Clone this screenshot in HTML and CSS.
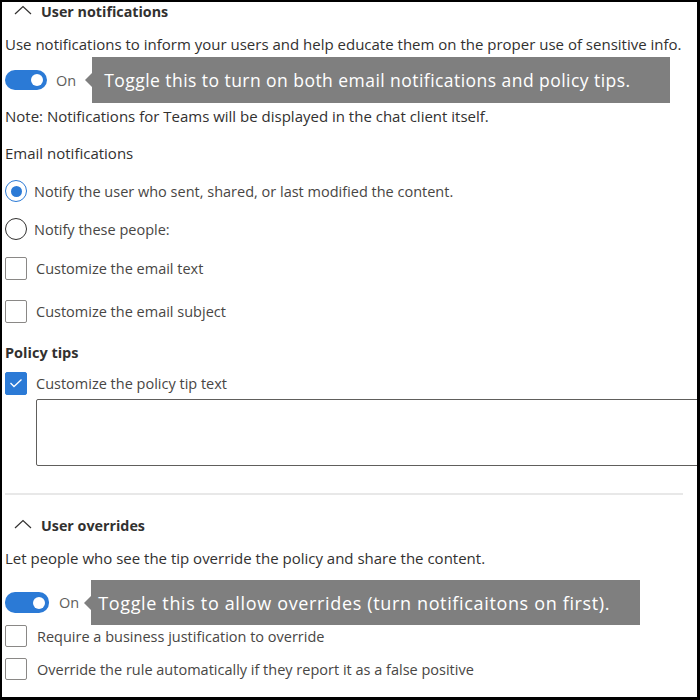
FILE: index.html
```html
<!DOCTYPE html>
<html>
<head>
<meta charset="utf-8">
<link rel="stylesheet" href="styles.css">
</head>
<body>
<div class="frame">
  <div class="section-head head-1">
    <svg class="chev" width="18" height="10" viewBox="0 0 18 10"><polyline points="1,9 9,1.5 17,9" fill="none" stroke="#323130" stroke-width="1.2"/></svg>
    <span class="head-title">User notifications</span>
  </div>
  <div class="text desc-1">Use notifications to inform your users and help educate them on the proper use of sensitive info.</div>
  <div class="toggle-row row-t1">
    <span class="toggle"><span class="knob"></span></span>
    <span class="on">On</span>
    <div class="callout callout-1">Toggle this to turn on both email notifications and policy tips.</div>
  </div>
  <div class="text note">Note: Notifications for Teams will be displayed in the chat client itself.</div>
  <div class="text sub-head">Email notifications</div>
  <div class="opt radio-1"><span class="radio checked"><span class="dot"></span></span><span class="label">Notify the user who sent, shared, or last modified the content.</span></div>
  <div class="opt radio-2"><span class="radio"></span><span class="label">Notify these people:</span></div>
  <div class="opt cb-1"><span class="cb"></span><span class="label lbl-cb">Customize the email text</span></div>
  <div class="opt cb-2"><span class="cb"></span><span class="label lbl-cb">Customize the email subject</span></div>
  <div class="text bold-head">Policy tips</div>
  <div class="opt cb-3"><span class="cb checked"><svg width="14" height="10" viewBox="0 0 14 10"><polyline points="1.5,5 5,8.5 12.5,1.5" fill="none" stroke="#fff" stroke-width="1.3"/></svg></span><span class="label lbl-cb">Customize the policy tip text</span></div>
  <div class="textarea"></div>
  <div class="sep"></div>
  <div class="section-head head-2">
    <svg class="chev" width="18" height="10" viewBox="0 0 18 10"><polyline points="1,9 9,1.5 17,9" fill="none" stroke="#323130" stroke-width="1.2"/></svg>
    <span class="head-title">User overrides</span>
  </div>
  <div class="text desc-2">Let people who see the tip override the policy and share the content.</div>
  <div class="toggle-row row-t2">
    <span class="toggle"><span class="knob"></span></span>
    <span class="on">On</span>
    <div class="callout callout-2">Toggle this to allow overrides (turn notificaitons on first).</div>
  </div>
  <div class="opt cb-4"><span class="cb"></span><span class="label lbl-cb2">Require a business justification to override</span></div>
  <div class="opt cb-5"><span class="cb"></span><span class="label lbl-cb2">Override the rule automatically if they report it as a false positive</span></div>
</div>
</body>
</html>
```

FILE: styles.css
```css
* { box-sizing: border-box; }
html, body { margin: 0; padding: 0; background: #fff; }
body { font-family: "Open Sans", "Noto Sans", sans-serif; color: #323130; }

.frame {
  width: 700px;
  height: 700px;
  border-top: 2px solid #000;
  border-left: 2px solid #000;
  border-right: 3px solid #000;
  border-bottom: 3px solid #000;
  overflow: hidden;
  padding-left: 3px;
  display: flex;
  flex-direction: column;
}

.text { font-size: 15px; line-height: 20px; height: 20px; white-space: nowrap; flex: 0 0 20px; }

.section-head { display: flex; align-items: center; flex: 0 0 16px; padding-left: 9px; }
.chev { margin-right: 9px; margin-top: -3px; }
.head-title { font-weight: 700; font-size: 14.3px; color: #323130; }
.head-1 { margin-top: 0; }

.desc-1 { margin-top: 13px; }

.toggle-row { display: flex; align-items: center; }
.row-t1 { margin-top: 3px; flex: 0 0 46px; }
.toggle {
  width: 42px; height: 20px; border-radius: 10px; background: #2b7ad6;
  display: flex; align-items: center; justify-content: flex-end; padding-right: 4px;
}
.row-t2 .toggle { width: 44px; height: 21px; }
.knob { width: 12px; height: 12px; border-radius: 50%; background: #fff; }
.on { font-size: 14.5px; color: #605e5c; margin-left: 9px; }
.row-t2 .on { margin-left: 10px; }

.callout {
  position: relative;
  background: #7f7f7f;
  color: #fff;
  height: 100%;
  display: flex;
  align-items: center;
  white-space: nowrap;
}
.callout::before {
  content: "";
  position: absolute;
  left: -7px;
  top: 50%;
  margin-top: -7px;
  border-top: 7px solid transparent;
  border-bottom: 7px solid transparent;
  border-right: 7px solid #7f7f7f;
}
.callout-1 { margin-left: 16px; width: 578px; padding-left: 12px; font-size: 17.5px; letter-spacing: 0.45px; }
.row-t2 { margin-top: 12px; flex: 0 0 45px; }
.callout-2 { margin-left: 12px; width: 549px; padding-left: 7px; font-size: 18px; letter-spacing: 0.65px; }

.note { margin-top: 3px; }
.sub-head { margin-top: 17px; }

.opt { display: flex; align-items: center; flex: 0 0 24px; }
.label { font-size: 14.5px; color: #484644; white-space: nowrap; }
.radio {
  width: 22px; height: 22px; border-radius: 50%; border: 1px solid #323130;
  display: flex; align-items: center; justify-content: center; margin-right: 7px;
}
.radio.checked { border-color: #2b7ad6; }
.dot { width: 11px; height: 11px; border-radius: 50%; background: #2b7ad6; }
.cb {
  width: 22px; height: 23px; border: 1px solid #8a8886; border-radius: 2px;
  display: flex; align-items: center; justify-content: center; margin-right: 9px;
}
.cb.checked { background: #2b7ad6; border-color: #2b7ad6; }

.radio-1 { margin-top: 16px; }
.radio-2 { margin-top: 14px; }
.cb-1 { margin-top: 15px; }
.cb-2 { margin-top: 19px; }
.bold-head { margin-top: 20px; font-weight: 700; font-size: 14.5px; }
.cb-3 { margin-top: 8px; }

.textarea {
  margin-top: 4px;
  margin-left: 31px;
  width: 700px;
  flex: 0 0 67px;
  border: 1px solid #605e5c;
  border-radius: 2px;
}
.sep { margin-top: 27px; width: 678px; flex: 0 0 2px; background: #e8e8e8; }
.head-2 { margin-top: 20px; flex-basis: 20px; }
.desc-2 { margin-top: 13px; }

.cb-4 { margin-top: 0; flex-basis: 22px; }
.cb-5 { margin-top: 11px; flex-basis: 22px; }
.cb-4 .cb, .cb-5 .cb { height: 22px; margin-right: 10px; }
```
